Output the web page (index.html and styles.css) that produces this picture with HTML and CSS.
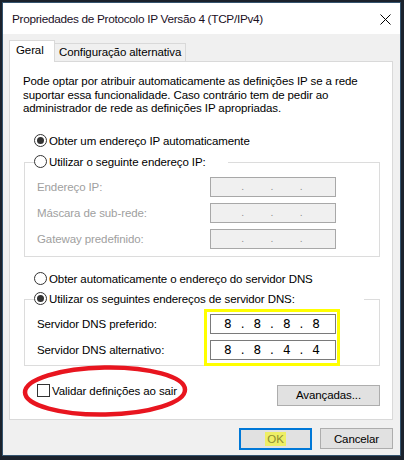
FILE: index.html
```html
<!DOCTYPE html>
<html lang="pt">
<head>
  <meta charset="UTF-8" />
  <title>Propriedades de Protocolo IP Versão 4 (TCP/IPv4)</title>
  <link rel="stylesheet" href="styles.css">
</head>
<body>
  <div class="window">
    <div class="titlebar">
      <span class="title">Propriedades de Protocolo IP Versão 4 (TCP/IPv4)</span>
      <svg class="close" width="11" height="11" viewBox="0 0 11 11">
        <path d="M0.5 0.5 L10.5 10.5 M10.5 0.5 L0.5 10.5" stroke="#000" stroke-width="1" fill="none" />
      </svg>
    </div>

    <div class="content">
      <div class="tabs">
        <div class="tab active">Geral</div>
        <div class="tab">Configuração alternativa</div>
      </div>

      <div class="panel">
        <p class="intro">Pode optar por atribuir automaticamente as definições IP se a rede suportar essa funcionalidade. Caso contrário tem de pedir ao administrador de rede as definições IP apropriadas.</p>

        <div class="radio-row first">
          <span class="radio checked"></span>Obter um endereço IP automaticamente
        </div>

        <div class="group">
          <div class="group-head ip-head">
            <span class="radio"></span>Utilizar o seguinte endereço IP:
          </div>
          <div class="group-body">
            <div class="labels disabled">
              <div class="label">Endereço IP:</div>
              <div class="label">Máscara de sub-rede:</div>
              <div class="label">Gateway predefinido:</div>
            </div>
            <div class="fields">
              <div class="ipbox off"><span></span>.<span></span>.<span></span>.<span></span></div>
              <div class="ipbox off"><span></span>.<span></span>.<span></span>.<span></span></div>
              <div class="ipbox off"><span></span>.<span></span>.<span></span>.<span></span></div>
            </div>
          </div>
        </div>

        <div class="radio-row dns-auto">
          <span class="radio"></span>Obter automaticamente o endereço do servidor DNS
        </div>

        <div class="group dns">
          <div class="group-head dns-head">
            <span class="radio checked"></span>Utilizar os seguintes endereços de servidor DNS:
          </div>
          <div class="group-body">
            <div class="labels">
              <div class="label">Servidor DNS preferido:</div>
              <div class="label">Servidor DNS alternativo:</div>
            </div>
            <div class="fields marked">
              <div class="ipbox"><span>8</span>.<span>8</span>.<span>8</span>.<span>8</span></div>
              <div class="ipbox"><span>8</span>.<span>8</span>.<span>4</span>.<span>4</span></div>
            </div>
          </div>
        </div>

        <div class="bottom-row">
          <label class="check-row"><span class="checkbox"></span>Validar definições ao sair</label>
          <button class="btn advanced">Avançadas...</button>
        </div>

        <svg class="circle-mark" width="170" height="56" viewBox="0 0 170 56">
          <ellipse cx="84" cy="28" rx="80" ry="23.5" fill="none" stroke="#e8151f" stroke-width="4.5" transform="rotate(-1 84 28)" />
        </svg>
      </div>

      <div class="actions">
        <button class="btn ok"><span class="hl">OK</span></button>
        <button class="btn">Cancelar</button>
      </div>
    </div>
  </div>
</body>
</html>
```

FILE: styles.css
```css
body {
  margin: 0;
  background-color: #1b222c;
  font-family: 'Liberation Sans', Arial, sans-serif;
  font-size: 11.5px;
  letter-spacing: -0.1px;
  color: #000;
  padding: 2px 3px 4px 2px;
}

.window {
  width: 397px;
  height: 452px;
  border: 1px solid #34546f;
  background-color: #f0f0f0;
}

.titlebar {
  height: 31px;
  background-color: #ffffff;
  display: flex;
  align-items: center;
  justify-content: space-between;
  padding: 0 9px 0 9px;
}

.title {
  font-size: 11.8px;
  letter-spacing: -0.3px;
  color: #1a0f1f;
}

.close {
  margin-top: 2px;
}

.content {
  padding: 7px 7px 0 6px;
}

.tabs {
  display: flex;
  align-items: flex-end;
  height: 20px;
  position: relative;
  z-index: 1;
}

.tab {
  height: 17px;
  padding: 0 4px;
  border: 1px solid #d9d9d9;
  border-bottom: none;
  background-color: #f0f0f0;
  line-height: 17px;
}

.tab.active {
  height: 21px;
  width: 38px;
  background-color: #ffffff;
  padding: 0 0 0 6px;
  line-height: 19px;
  margin-bottom: -1px;
}

.tab + .tab {
  border-left: none;
}

.panel {
  position: relative;
  height: 357px;
  border: 1px solid #d9d9d9;
  background-color: #ffffff;
  padding: 0 12px 0 13px;
}

.intro {
  margin: 13px 0 0 0;
  line-height: 13.5px;
  width: 345px;
}

.radio-row,
.group-head,
.check-row {
  display: flex;
  align-items: center;
  height: 16px;
  white-space: nowrap;
}

.radio-row {
  margin-left: 11px;
}

.radio-row.first {
  margin-top: 17px;
}

.radio-row.dns-auto {
  margin-top: 14px;
}

.radio {
  width: 11px;
  height: 11px;
  border: 1px solid #333333;
  border-radius: 50%;
  margin-right: 2px;
  display: flex;
  align-items: center;
  justify-content: center;
  flex-shrink: 0;
}

.radio.checked::after {
  content: "";
  width: 7px;
  height: 7px;
  border-radius: 50%;
  background-color: #333333;
}

.group {
  margin: 13px 0 0 1px;
  border: 1px solid #dcdcdc;
  padding: 0 0 7px 12px;
}

.group.dns {
  margin-top: 12px;
  padding-bottom: 5px;
}

.group-head {
  margin: -9px 0 0 -3px;
  padding-left: 0;
  background-color: #ffffff;
}

.ip-head {
  width: 194px;
}

.dns-head {
  width: 330px;
}

.group-body {
  display: flex;
  justify-content: space-between;
  margin-top: 7px;
  padding-right: 43px;
}

.labels {
  display: flex;
  flex-direction: column;
  gap: 6px;
}

.label {
  height: 20px;
  line-height: 20px;
}

.labels.disabled {
  color: #a0a0a0;
}

.fields {
  display: flex;
  flex-direction: column;
  gap: 6px;
}

.fields.marked {
  position: relative;
}

.fields.marked::after {
  content: "";
  position: absolute;
  left: -6px;
  top: -5px;
  right: -4px;
  bottom: -6px;
  border: 3px solid #ffff00;
}

.ipbox {
  height: 18px;
  border: 1px solid #7a7a7a;
  background-color: #ffffff;
  display: flex;
  align-items: center;
  line-height: 18px;
  padding: 0 6px 0 4px;
  width: 114px;
  font-family: 'DejaVu Sans', sans-serif;
  font-size: 12px;
  letter-spacing: 0;
}

.ipbox span {
  flex: 1;
  text-align: center;
}

.ipbox.off {
  background-color: #f0f0f0;
  border-color: #a8a8a8;
  color: #8a8a8a;
  font-size: 9px;
}

.bottom-row {
  display: flex;
  justify-content: space-between;
  align-items: flex-start;
  margin: 18px 0 0 14px;
}

.check-row {
  height: 14px;
}

.checkbox {
  width: 11px;
  height: 11px;
  border: 1px solid #333333;
  margin-right: 2px;
}

.btn {
  font-family: inherit;
  font-size: 11.5px;
  letter-spacing: -0.1px;
  color: #000;
  background-color: #e1e1e1;
  border: 1px solid #adadad;
  height: 21px;
  width: 73px;
  padding: 0;
}

.btn.advanced {
  width: 103px;
  margin-top: 1px;
}

.circle-mark {
  position: absolute;
  left: 11px;
  top: 301px;
}

.actions {
  display: flex;
  justify-content: flex-end;
  gap: 8px;
  margin-top: 8px;
}

.btn.ok {
  border: 2px solid #0078d7;
  height: 22px;
}

.hl {
  background-color: #eeee66;
  color: #8c8c30;
  padding: 1px 2px;
}
```
